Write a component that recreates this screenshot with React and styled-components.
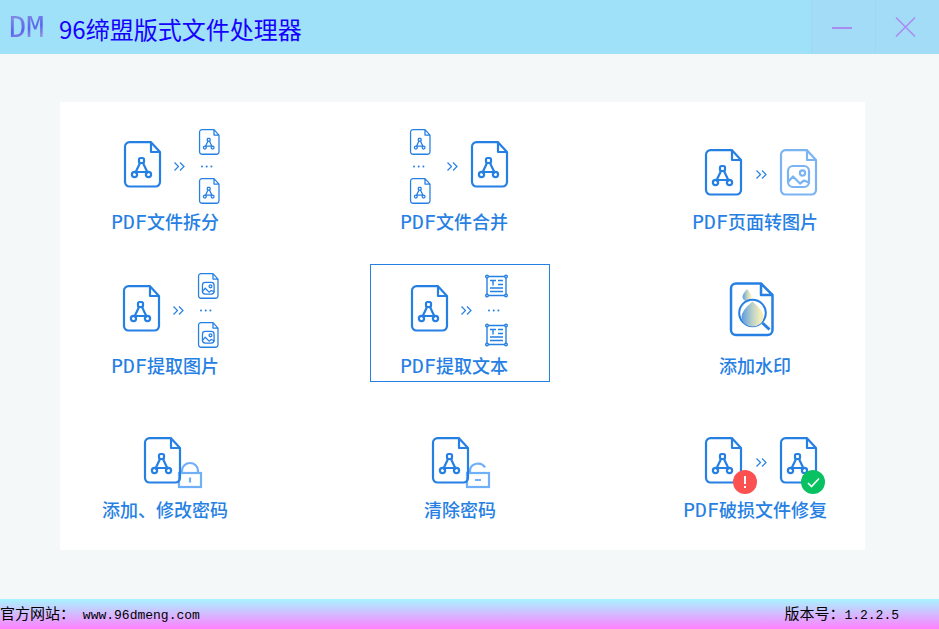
import React from "react";
import styled, { createGlobalStyle } from "styled-components";

const BLUE = "#2680e3";
const LIGHT = "#7ab4f3";
const LOCK = "#70b0fb";

const GlobalStyle = createGlobalStyle`
  * { box-sizing: border-box; }
  body { margin: 0; font-family: "Noto Sans CJK SC", sans-serif; }
  button { font: inherit; cursor: pointer; }
`;

const Page = styled.div`
  display: flex;
  flex-direction: column;
  min-height: 100vh;
  background: #f4f8f9;
`;

const TitleBar = styled.header`
  display: flex;
  align-items: stretch;
  height: 54px;
  padding-left: 9px;
  background: #9ee1f8;
`;

const Logo = styled.span`
  align-self: center;
  width: 50px;
  font: 29px/56px "DejaVu Sans Mono", monospace;
  color: transparent;
  background: linear-gradient(165deg, #7c88e4 30%, #5a63ee 50%, #a7a0db 70%);
  background-clip: text;
`;

const Title = styled.h1`
  flex: 1;
  margin: 0;
  font-size: 24px;
  font-weight: 400;
  line-height: 57px;
  color: #1600ff;
`;

const WindowButton = styled.button`
  display: grid;
  place-items: center;
  width: 64px;
  padding: 0 3px 0 0;
  border: 0;
  border-left: 1px solid #9bd9f4;
  background: #a3dcf7;
  color: #a98cf0;
`;

const Main = styled.main`
  flex: 1;
  padding: 48px 74px 48px 60px;
`;

const Panel = styled.div`
  display: grid;
  grid-template-columns: repeat(3, 180px);
  justify-content: space-between;
  row-gap: 26px;
  padding: 18px 20px 24px 15px;
  background: #fff;
`;

const Tile = styled.button`
  display: flex;
  flex-direction: column;
  align-items: center;
  height: 118px;
  padding: 0 ${(p) => (p.$inset ? "12px" : "0")} 0 0;
  border: 0;
  outline: ${(p) => (p.$active ? `1px solid ${BLUE}` : "none")};
  outline-offset: -1px;
  background: #fff;
  color: ${BLUE};
`;

const Label = styled.span`
  font-size: 18px;
  font-weight: 500;
  line-height: 26px;
  white-space: nowrap;
`;

const Latin = styled.span`
  font-family: "DejaVu Sans Mono", monospace;
  font-size: 20px;
  font-weight: 400;
  line-height: 20px;
`;

const Footer = styled.footer`
  display: flex;
  justify-content: space-between;
  height: 30px;
  padding-right: 40px;
  background: linear-gradient(#a8f4ff, #ff80ff);
  color: #000;
  font-size: 15px;
  line-height: 28px;
  white-space: pre;
`;

const Mono = styled.span`
  font-family: "Liberation Mono", monospace;
  font-size: 13px;
`;

const SiteLink = styled.a`
  color: inherit;
  text-decoration: none;
`;

function Sheet({ x, y, small, color = BLUE, children }) {
  return (
    <g
      transform={`translate(${x} ${y}) scale(${small ? 0.555 : 1})`}
      fill="none"
      stroke={color}
      strokeWidth={small ? 2.3 : 2.2}
      strokeLinejoin="round"
      strokeLinecap="round"
    >
      <path d="M5.500 1.200H27L36 11V41a4.500 4.500 0 0 1-4.500 4.500h-26A4.500 4.500 0 0 1 1 41V5.700a4.500 4.500 0 0 1 4.500-4.500ZM27 1.200V11h9" />
      {children}
    </g>
  );
}

function Pdf(props) {
  return (
    <Sheet {...props}>
      <path d="M16 22 11.500 31.500M19 22l4.500 9.500M12.500 31h10" />
      <rect x="15" y="17" width="5" height="5" rx="1.500" />
      <circle cx="10.500" cy="33.500" r="2.600" />
      <circle cx="24.500" cy="33.500" r="2.600" />
    </Sheet>
  );
}

function Picture(props) {
  return (
    <Sheet {...props}>
      <rect x="8" y="17" width="21" height="21" rx="5" />
      <circle cx="22.500" cy="24" r="2.600" />
      <path d="M8 33l5-5.500 7 7 4-3 5 2" />
    </Sheet>
  );
}

function Arrows({ x, y }) {
  return (
    <path
      transform={`translate(${x} ${y})`}
      d="M0.500 0.500l4 4-4 4M6 0.500l4 4-4 4"
      fill="none"
      stroke={BLUE}
      strokeWidth="1.200"
    />
  );
}

function Dots({ x }) {
  return (
    <g fill={BLUE}>
      <circle cx={x} cy="46.500" r="1" />
      <circle cx={x + 4.7} cy="46.500" r="1" />
      <circle cx={x + 9.4} cy="46.500" r="1" />
    </g>
  );
}

function TextFrame({ x, y }) {
  return (
    <g transform={`translate(${x} ${y})`} fill="none" stroke={BLUE} strokeWidth="1.400">
      <path d="M3 1.500h17M3 20.500h17M2 3v16M21 3v16" />
      <path d="M5 5.500h6M8 5.500v5M13 5.500h5M13 9.500h5M5 13h13M5 16.500h13" />
      <g fill="#fff">
        <circle cx="2" cy="1.600" r="1.300" />
        <circle cx="21" cy="1.600" r="1.300" />
        <circle cx="2" cy="20.500" r="1.300" />
        <circle cx="21" cy="20.500" r="1.300" />
      </g>
    </g>
  );
}

function Padlock({ x, open }) {
  return (
    <g transform={`translate(${x} 54)`} fill="none" stroke={LOCK} strokeWidth="2.200">
      <rect x="1" y="11" width="22" height="14" fill="#fff" />
      {open ? (
        <path d="M4 11V8.500a8 7.500 0 0 1 15-3M9 18h6" />
      ) : (
        <path d="M4 11V8.500a8 7.500 0 0 1 16 0V11M12 15.500v5" />
      )}
    </g>
  );
}

function Watermark() {
  return (
    <g fill="none" stroke={BLUE} strokeWidth="2.500" strokeLinejoin="round">
      <defs>
        <linearGradient id="drop">
          <stop offset="0" stopColor="#5b9be0" />
          <stop offset="0.500" stopColor="#bcd2c8" />
          <stop offset="0.850" stopColor="#f3ecb8" />
        </linearGradient>
      </defs>
      <path d="M53 19.500h25L89.500 31v35a5 5 0 0 1-5 5H53a5 5 0 0 1-5-5V24.500a5 5 0 0 1 5-5ZM78 19.500V31h11.500" />
      <path d="M64 25q4.500 5 4.500 8a4.500 4 0 0 1-9 0q0-3 4.500-8Z" fill="url(#drop)" stroke="none" />
      <circle cx="69.500" cy="49" r="13.300" fill="#fff" strokeWidth="2" />
      <path d="M69.500 37.500q11 9 11 15.500a11 9.500 0 0 1-22 0q0-6.500 11-15.500Z" fill="url(#drop)" stroke="none" />
      <path d="M79.500 59l7 6.500" strokeWidth="3" />
    </g>
  );
}

const drawings = {
  split: (
    <>
      <Pdf x={31} y={21} />
      <Arrows x={81} y={42} />
      <Pdf x={106} y={9} small />
      <Dots x={109} />
      <Pdf x={106} y={58} small />
    </>
  ),
  merge: (
    <>
      <Pdf x={28} y={9} small />
      <Dots x={32} />
      <Pdf x={28} y={58} small />
      <Arrows x={65} y={42} />
      <Pdf x={89} y={21} />
    </>
  ),
  toImage: (
    <>
      <Pdf x={22} y={29} />
      <Arrows x={73} y={50} />
      <Picture x={97} y={29} color={LIGHT} />
    </>
  ),
  images: (
    <>
      <Pdf x={30} y={21} />
      <Arrows x={80} y={42} />
      <Picture x={105} y={9} small />
      <Dots x={108} />
      <Picture x={105} y={58} small />
    </>
  ),
  text: (
    <>
      <Pdf x={29} y={21} />
      <Arrows x={79} y={42} />
      <TextFrame x={103} y={11} />
      <Dots x={107} />
      <TextFrame x={103} y={60} />
    </>
  ),
  watermark: <Watermark />,
  lock: (
    <>
      <Padlock x={85} />
      <Pdf x={51} y={29} />
    </>
  ),
  unlock: (
    <>
      <Padlock x={78} open />
      <Pdf x={44} y={29} />
    </>
  ),
  repair: (
    <>
      <Pdf x={22} y={29} />
      <Arrows x={73} y={50} />
      <Pdf x={97} y={29} />
      <circle cx="62" cy="74" r="12" fill="#fc5151" />
      <path d="M62 68v8M62 78v2" stroke="#fff" strokeWidth="2" />
      <circle cx="130" cy="74" r="12" fill="#08c160" />
      <path d="M125 75l3.500 3.500 7.500-8" fill="none" stroke="#fff" strokeWidth="1.600" />
    </>
  ),
};

const tools = [
  { icon: "split", latin: "PDF", text: "文件拆分" },
  { icon: "merge", latin: "PDF", text: "文件合并", inset: true },
  { icon: "toImage", latin: "PDF", text: "页面转图片" },
  { icon: "images", latin: "PDF", text: "提取图片" },
  { icon: "text", latin: "PDF", text: "提取文本", inset: true, active: true },
  { icon: "watermark", text: "添加水印" },
  { icon: "lock", text: "添加、修改密码" },
  { icon: "unlock", text: "清除密码" },
  { icon: "repair", latin: "PDF", text: "破损文件修复" },
];

export default function App() {
  return (
    <Page>
      <GlobalStyle />
      <TitleBar>
        <Logo>DM</Logo>
        <Title>96缔盟版式文件处理器</Title>
        <WindowButton aria-label="最小化">
          <svg width="22" height="22" fill="none" stroke="currentColor" strokeWidth="2">
            <path d="M1 12h20" />
          </svg>
        </WindowButton>
        <WindowButton aria-label="关闭">
          <svg width="22" height="22" fill="none" stroke="currentColor" strokeWidth="1.600">
            <path d="M1 1.500l19 19M20 1.500l-19 19" />
          </svg>
        </WindowButton>
      </TitleBar>
      <Main>
        <Panel>
          {tools.map((t) => (
            <Tile key={t.icon} $inset={t.inset} $active={t.active}>
              <svg width="144" height="88" viewBox="0 0 144 88" aria-hidden="true">
                {drawings[t.icon]}
              </svg>
              <Label>
                {t.latin && <Latin>{t.latin}</Latin>}
                {t.text}
              </Label>
            </Tile>
          ))}
        </Panel>
      </Main>
      <Footer>
        <span>
          官方网站：<Mono> <SiteLink href="http://www.96dmeng.com">www.96dmeng.com</SiteLink></Mono>
        </span>
        <span>
          版本号：<Mono>1.2.2.5</Mono>
        </span>
      </Footer>
    </Page>
  );
}
